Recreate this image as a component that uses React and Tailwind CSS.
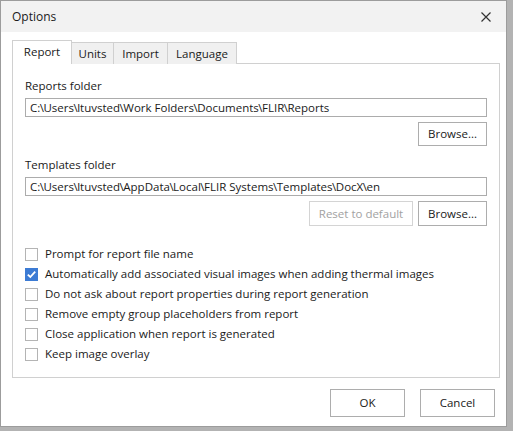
import React from "react";

const font = { fontFamily: '"Open Sans", "Noto Sans", sans-serif' };

function Path({ text }) {
  const parts = text.split("\\");
  return (
    <span>
      {parts.map((p, i) => (
        <React.Fragment key={i}>
          {i > 0 && <span className="mx-[-0.5px]">\</span>}
          {p}
        </React.Fragment>
      ))}
    </span>
  );
}

function Checkbox({ checked, label }) {
  return (
    <div className="flex items-center h-[20px]">
      {checked ? (
        <div className="w-[13px] h-[13px] bg-[#3c7bd4] flex items-center justify-center">
          <svg width="11" height="11" viewBox="0 0 11 11">
            <path d="M1.8 5.6 L4.3 8 L9.2 2.6" fill="none" stroke="white" strokeWidth="1.8" />
          </svg>
        </div>
      ) : (
        <div className="w-[13px] h-[13px] border border-[#b4b4b4] bg-white" />
      )}
      <span className="ml-[7px] text-[11.5px] text-[#1a1a1a] leading-[16px]">{label}</span>
    </div>
  );
}

function Btn({ children, className = "", disabled }) {
  return (
    <div
      className={
        "flex items-center justify-center border bg-white text-[11.5px] " +
        (disabled ? "border-[#d4d4d4] text-[#a2a2a2] " : "border-[#adadad] text-[#1a1a1a] ") +
        className
      }
    >
      {children}
    </div>
  );
}

export default function App() {
  const tabs = [
    { name: "Units", w: "w-[42px]" },
    { name: "Import", w: "w-[54px]" },
    { name: "Language", w: "w-[69px]" },
  ];
  return (
    <div className="w-[513px] h-[431px] bg-[#b3b3b3] overflow-hidden" style={font}>
      <div className="w-[507px] h-[427px] border border-[#9c9c9c] bg-white flex flex-col">
        <div className="h-[31px] bg-[#f2f2f2] flex items-center justify-between pl-[11px] pr-[8px]">
          <span className="text-[12px] text-[#1a1a1a]">Options</span>
          <svg width="24" height="16" viewBox="0 0 24 16">
            <path d="M7.5 3.5 L16.5 12.5 M16.5 3.5 L7.5 12.5" stroke="#333" strokeWidth="1.2" fill="none" />
          </svg>
        </div>
        <div className="pl-[11px] pr-[6px] pt-[8px]">
          <div className="flex items-end h-[24px] relative z-10">
            <div className="w-[60px] h-[24px] border border-b-0 border-[#d0d0d0] bg-white flex items-center justify-center text-[11.5px] text-[#1a1a1a] pb-[1px]">
              Report
            </div>
            {tabs.map((t) => (
              <div
                key={t.name}
                className={
                  t.w +
                  " h-[22px] border border-l-0 border-b-0 border-[#d0d0d0] bg-[#f0f0f0] flex items-center justify-center text-[11.5px] text-[#1a1a1a]"
                }
              >
                {t.name}
              </div>
            ))}
          </div>
          <div className="-mt-px h-[315px] border border-[#d0d0d0] bg-white px-[12px] pt-[14px] flex flex-col">
            <div className="text-[11.5px] leading-[16px] text-[#1a1a1a]">Reports folder</div>
            <div className="mt-[4px] h-[19px] border border-[#acacac] flex items-center px-[4px] text-[11.5px] text-[#1a1a1a]">
              <Path text="C:\Users\ltuvsted\Work Folders\Documents\FLIR\Reports" />
            </div>
            <div className="mt-[5px] flex justify-end">
              <Btn className="w-[69px] h-[24px]">Browse...</Btn>
            </div>
            <div className="mt-[11px] text-[11.5px] leading-[16px] text-[#1a1a1a]">Templates folder</div>
            <div className="mt-[4px] h-[19px] border border-[#acacac] flex items-center px-[4px] text-[11.5px] text-[#1a1a1a]">
              <Path text="C:\Users\ltuvsted\AppData\Local\FLIR Systems\Templates\DocX\en" />
            </div>
            <div className="mt-[5px] flex justify-end gap-[5px]">
              <Btn disabled className="w-[104px] h-[25px]">Reset to default</Btn>
              <Btn className="w-[69px] h-[25px]">Browse...</Btn>
            </div>
            <div className="mt-[18px] flex flex-col">
              <Checkbox label="Prompt for report file name" />
              <Checkbox checked label="Automatically add associated visual images when adding thermal images" />
              <Checkbox label="Do not ask about report properties during report generation" />
              <Checkbox label="Remove empty group placeholders from report" />
              <Checkbox label="Close application when report is generated" />
              <Checkbox label="Keep image overlay" />
            </div>
          </div>
        </div>
        <div className="flex justify-end gap-[15px] pr-[11px] mt-[11px]">
          <Btn className="w-[75px] h-[28px]">OK</Btn>
          <Btn className="w-[75px] h-[28px]">Cancel</Btn>
        </div>
      </div>
    </div>
  );
}
